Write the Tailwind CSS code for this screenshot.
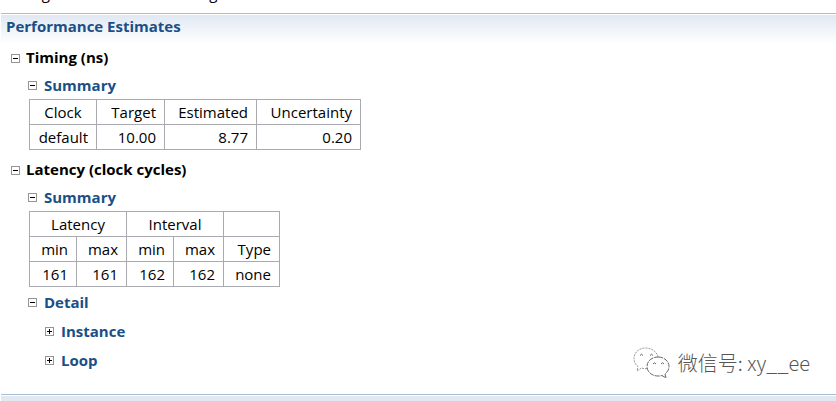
<!DOCTYPE html>
<html lang="en">
<head>
    <meta charset="UTF-8">
    <meta name="viewport" content="width=device-width, initial-scale=1.0">
    <title>Synthesis Report</title>
    <script src="https://cdn.jsdelivr.net/npm/@tailwindcss/browser@4"></script>
</head>
<body class="bg-white text-black font-['Open_Sans','Noto_Sans_CJK_SC',sans-serif] text-[15px] leading-6">
    <div class="relative flex flex-col min-h-screen overflow-hidden pl-px">
        <!-- general information, scrolled almost out of view -->
        <div class="flex h-[13px] items-start overflow-hidden pl-[18px]">
            <div class="-mt-[19px] flex gap-[26px]">
                <span>Target device:</span>
                <span>xc7z010clg400-1</span>
            </div>
        </div>

        <main class="flex-1">
            <div class="border-t border-[#a8bfd2] pt-px">
                <h1 class="bg-linear-to-b from-[#e1e8f2] to-white h-[29px] pl-[5px] font-bold leading-[22px] text-[#1a4f86]">Performance Estimates</h1>
            </div>

            <section class="pl-[10px]">
                <h2 class="flex h-7 items-center gap-[6px] pb-[2px] font-bold">
                    <button type="button" aria-label="Collapse Timing" class="mt-[2px] shrink-0"><svg class="block" width="9" height="9" shape-rendering="crispEdges"><rect width="9" height="9" fill="#969696"/><rect x="1" y="1" width="7" height="7" fill="#fff"/><path d="M2 4h5v1H2z"/></svg></button>
                    Timing (ns)
                </h2>
                <div class="pl-[17px]">
                    <h3 class="flex h-[27px] items-center gap-[7px] pb-[2px] font-bold text-[#1a4f86]">
                        <button type="button" aria-label="Collapse Timing Summary" class="mt-[2px] shrink-0"><svg class="block" width="9" height="9" shape-rendering="crispEdges"><rect width="9" height="9" fill="#969696"/><rect x="1" y="1" width="7" height="7" fill="#fff"/><path fill="#000" d="M2 4h5v1H2z"/></svg></button>
                        Summary
                    </h3>
                    <table class="ml-px border-separate border-spacing-0 border-t border-l border-[#a9a9b0] text-right [&_td]:h-[25px] [&_td]:border-r [&_td]:border-b [&_td]:border-[#a9a9b0] [&_td]:px-2 [&_th]:h-[25px] [&_th]:border-r [&_th]:border-b [&_th]:border-[#a9a9b0] [&_th]:px-2 [&_th]:font-normal">
                        <tr>
                            <th class="w-[67px] text-center">Clock</th>
                            <th class="w-[68px]">Target</th>
                            <th class="w-[92px]">Estimated</th>
                            <th class="w-[104px]">Uncertainty</th>
                        </tr>
                        <tr>
                            <td>default</td>
                            <td>10.00</td>
                            <td>8.77</td>
                            <td>0.20</td>
                        </tr>
                    </table>
                </div>
            </section>

            <section class="pl-[10px] pt-[6px]">
                <h2 class="flex h-7 items-center gap-[6px] pb-[2px] font-bold">
                    <button type="button" aria-label="Collapse Latency" class="mt-[2px] shrink-0"><svg class="block" width="9" height="9" shape-rendering="crispEdges"><rect width="9" height="9" fill="#969696"/><rect x="1" y="1" width="7" height="7" fill="#fff"/><path d="M2 4h5v1H2z"/></svg></button>
                    Latency (clock cycles)
                </h2>
                <div class="pl-[17px]">
                    <h3 class="flex h-[27px] items-center gap-[7px] pb-[2px] font-bold text-[#1a4f86]">
                        <button type="button" aria-label="Collapse Latency Summary" class="mt-[2px] shrink-0"><svg class="block" width="9" height="9" shape-rendering="crispEdges"><rect width="9" height="9" fill="#969696"/><rect x="1" y="1" width="7" height="7" fill="#fff"/><path fill="#000" d="M2 4h5v1H2z"/></svg></button>
                        Summary
                    </h3>
                    <table class="ml-px border-separate border-spacing-0 border-t border-l border-[#a9a9b0] text-right [&_td]:h-[25px] [&_td]:border-r [&_td]:border-b [&_td]:border-[#a9a9b0] [&_td]:px-2 [&_th]:h-[25px] [&_th]:border-r [&_th]:border-b [&_th]:border-[#a9a9b0] [&_th]:px-2 [&_th]:font-normal">
                        <tr>
                            <th colspan="2" class="text-center">Latency</th>
                            <th colspan="2" class="text-center">Interval</th>
                            <th></th>
                        </tr>
                        <tr>
                            <th class="w-[47px]">min</th>
                            <th class="w-[50px]">max</th>
                            <th class="w-[47px]">min</th>
                            <th class="w-[50px]">max</th>
                            <th class="w-[56px]">Type</th>
                        </tr>
                        <tr>
                            <td>161</td>
                            <td>161</td>
                            <td>162</td>
                            <td>162</td>
                            <td>none</td>
                        </tr>
                    </table>

                    <div class="pt-px font-bold text-[#1a4f86]">
                        <h3 class="flex h-[29px] items-center gap-[7px] pb-[2px]">
                            <button type="button" aria-label="Collapse Detail" class="mt-[2px] shrink-0"><svg class="block" width="9" height="9" shape-rendering="crispEdges"><rect width="9" height="9" fill="#969696"/><rect x="1" y="1" width="7" height="7" fill="#fff"/><path fill="#000" d="M2 4h5v1H2z"/></svg></button>
                            Detail
                        </h3>
                        <h4 class="ml-[17px] flex h-[29px] items-center gap-[7px] pb-[2px]">
                            <button type="button" aria-label="Expand Instance" class="mt-[2px] shrink-0"><svg class="block" width="9" height="9" shape-rendering="crispEdges"><rect width="9" height="9" fill="#969696"/><rect x="1" y="1" width="7" height="7" fill="#fff"/><path fill="#000" d="M2 4h5v1H2zM4 2h1v5H4z"/></svg></button>
                            Instance
                        </h4>
                        <h4 class="ml-[17px] flex h-[29px] items-center gap-[7px] pb-[2px]">
                            <button type="button" aria-label="Expand Loop" class="mt-[2px] shrink-0"><svg class="block" width="9" height="9" shape-rendering="crispEdges"><rect width="9" height="9" fill="#969696"/><rect x="1" y="1" width="7" height="7" fill="#fff"/><path fill="#000" d="M2 4h5v1H2zM4 2h1v5H4z"/></svg></button>
                            Loop
                        </h4>
                    </div>
                </div>
            </section>
        </main>

        <div class="border-t border-[#a8bfd2] pt-px">
            <div class="h-[5px] bg-[#e1e8f2]"></div>
        </div>

        <!-- account watermark -->
        <div class="absolute right-[26px] bottom-[22px] flex items-center gap-2 font-['Noto_Sans_CJK_SC',sans-serif] text-xl font-light text-[#555]">
            <svg width="37" height="32" viewBox="0 0 37 32" fill="none" stroke="#999" stroke-width="1" stroke-dasharray="2 1">
                <path d="M14 21.500C12 22 10 21.500 8.500 21L4 24l1-4.500C2 17.500 1 14.500 1 11.500 1 5.500 6 1 12.500 1 19 1 24 5 25 10"/>
                <path fill="#fff" stroke="#666" stroke-dasharray="5 1" d="M25 10c6 0 11 4 11 9.500 0 3-1.500 5.500-4 7.500l1 4-4-2.500c-1.500.500-2.500.500-4 .500-6 0-11-4-11-9.500S19 10 25 10z"/>
                <path stroke="#666" stroke-dasharray="none" d="M7 8.500q1.500-2.500 3 0M17 8.500q1.500-2.500 3 0M20 17q1.500-2.500 3 0M28 17q1.500-2.500 3 0"/>
            </svg>
            <span>微信号: xy__ee</span>
        </div>
    </div>
</body>
</html>
